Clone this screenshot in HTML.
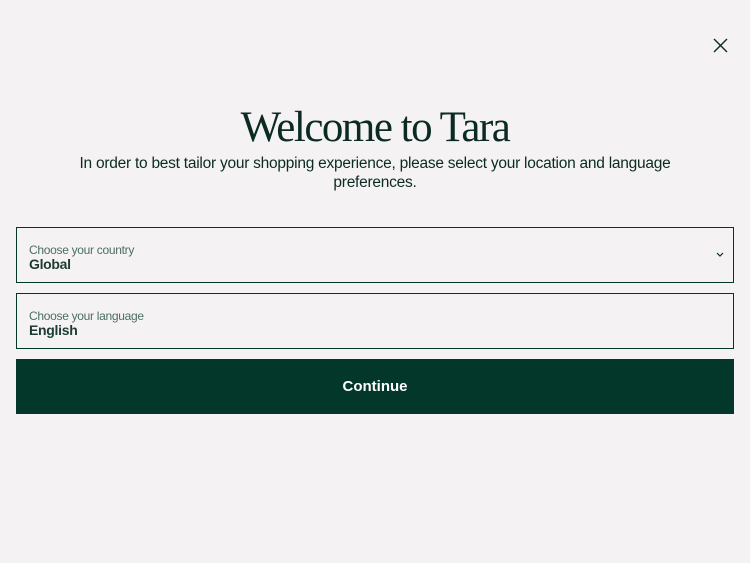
<!DOCTYPE html>
<html><head><style>
body{margin:0;width:750px;height:563px;background:#f4f2f2;font-family:"Liberation Sans",sans-serif;color:#03372a;position:relative;overflow:hidden}
.x{position:absolute;left:713px;top:38px}
h1{position:absolute;top:103px;left:0;width:750px;margin:0;text-align:center;font-family:"Liberation Serif",serif;font-weight:normal;font-size:43px;letter-spacing:-1.5px;color:#0b2a24}
p{position:absolute;top:154px;left:60px;width:630px;margin:0;text-align:center;font-size:15.5px;line-height:19px;letter-spacing:-0.25px;color:#0b2a24}
.f{position:absolute;left:16px;width:716px;height:54px;border:1px solid #03372a;box-sizing:content-box}
.f .l{position:absolute;left:12px;top:15px;font-size:12px;color:#4b6e66;letter-spacing:-0.3px}
.f .v{position:absolute;left:12px;top:28px;font-size:14px;font-weight:bold;color:#1d3b34;letter-spacing:-0.3px}
.btn{position:absolute;left:16px;top:359px;width:718px;height:55px;background:#03372a;color:#fff;font-weight:bold;font-size:15px;text-align:center;line-height:55px}
</style></head><body>
<svg class="x" width="15" height="15" viewBox="0 0 15 15"><path d="M1 1L14 14M14 1L1 14" stroke="#0b2a24" stroke-width="1.4"/></svg>
<h1>Welcome to Tara</h1>
<p>In order to best tailor your shopping experience, please select your location and language preferences.</p>
<div class="f" style="top:227px"><span class="l">Choose your country</span><span class="v">Global</span>
<svg style="position:absolute;left:699px;top:24px" width="8" height="6" viewBox="0 0 8 6"><path d="M1 1L4 4L7 1" fill="none" stroke="#03372a" stroke-width="1.2"/></svg></div>
<div class="f" style="top:293px"><span class="l">Choose your language</span><span class="v">English</span></div>
<div class="btn">Continue</div>
</body></html>
